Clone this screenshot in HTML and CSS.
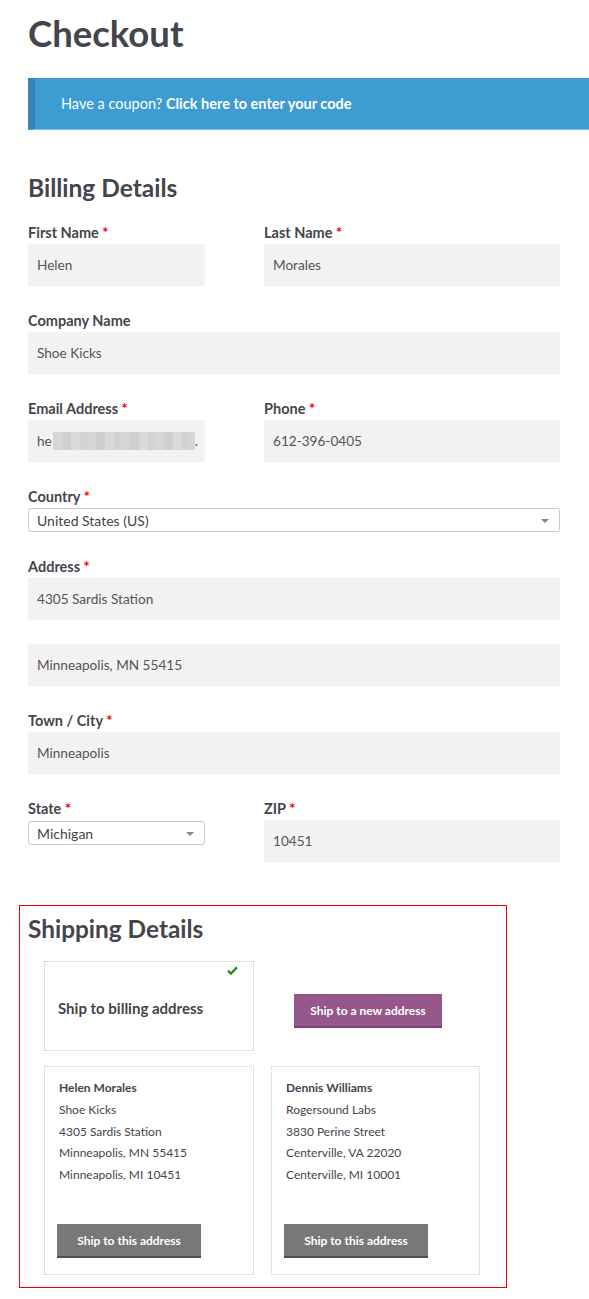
FILE: index.html
```html
<!DOCTYPE html>
<html>
<head>
<meta charset="utf-8">
<title>Checkout</title>
<link rel="stylesheet" href="styles.css">
</head>
<body>
<div class="page">
  <h1 class="title">Checkout</h1>
  <div class="coupon">Have a coupon?&nbsp;<b>Click here to enter your code</b></div>

  <h2 class="section-title">Billing Details</h2>

  <div class="row">
    <div class="field half-l">
      <label class="label">First Name <span class="req">*</span></label>
      <div class="input">Helen</div>
    </div>
    <div class="field half-r">
      <label class="label">Last Name <span class="req">*</span></label>
      <div class="input">Morales</div>
    </div>
  </div>

  <div class="field">
    <label class="label">Company Name</label>
    <div class="input">Shoe Kicks</div>
  </div>

  <div class="row">
    <div class="field half-l">
      <label class="label">Email Address <span class="req">*</span></label>
      <div class="input">he<span class="blur"></span>.</div>
    </div>
    <div class="field half-r">
      <label class="label">Phone <span class="req">*</span></label>
      <div class="input">612-396-0405</div>
    </div>
  </div>

  <div class="field">
    <label class="label">Country <span class="req">*</span></label>
    <div class="select">United States (US)<span class="arrow"></span></div>
  </div>

  <div class="field">
    <label class="label">Address <span class="req">*</span></label>
    <div class="input">4305 Sardis Station</div>
  </div>
  <div class="field">
    <div class="input">Minneapolis, MN 55415</div>
  </div>

  <div class="field">
    <label class="label">Town / City <span class="req">*</span></label>
    <div class="input">Minneapolis</div>
  </div>

  <div class="row">
    <div class="field half-l">
      <label class="label">State <span class="req">*</span></label>
      <div class="select state">Michigan<span class="arrow"></span></div>
    </div>
    <div class="field half-r">
      <label class="label">ZIP <span class="req">*</span></label>
      <div class="input">10451</div>
    </div>
  </div>

  <div class="shipping">
    <h2 class="ship-title">Shipping Details</h2>
    <div class="ship-grid">
      <div class="card billing-card">
        <span class="check"><svg width="11" height="9" viewBox="0 0 11 9"><path d="M1 4.6 L4 7.6 L10 1.2" fill="none" stroke="#1a8a1a" stroke-width="2.2"/></svg></span>
        Ship to billing address
      </div>
      <div class="new-wrap">
        <button class="btn-new">Ship to a new address</button>
      </div>
      <div class="card addr-card">
        <div class="addr-lines">
          <div class="addr-name">Helen Morales</div>
          <div>Shoe Kicks</div>
          <div>4305 Sardis Station</div>
          <div>Minneapolis, MN 55415</div>
          <div>Minneapolis, MI 10451</div>
        </div>
        <button class="btn-ship">Ship to this address</button>
      </div>
      <div class="card addr-card">
        <div class="addr-lines">
          <div class="addr-name">Dennis Williams</div>
          <div>Rogersound Labs</div>
          <div>3830 Perine Street</div>
          <div>Centerville, VA 22020</div>
          <div>Centerville, MI 10001</div>
        </div>
        <button class="btn-ship">Ship to this address</button>
      </div>
    </div>
  </div>
</div>
</body>
</html>
```

FILE: styles.css
```css
* { box-sizing: border-box; }
html, body { overflow-x: hidden; }
body {
  margin: 0;
  font-family: Lato, "Liberation Sans", sans-serif;
  color: #43454b;
  background: #fff;
}
.page {
  width: 532px;
  margin-left: 28px;
}
.title {
  font-size: 36.5px;
  line-height: 46px;
  font-weight: 700;
  margin: 10px 0 22px;
}
.coupon {
  height: 52px;
  margin-right: -29px;
  background: #3d9cd2;
  border-left: 7px solid #3385b5;
  border-bottom: 1px solid #85c0e3;
  display: flex;
  align-items: center;
  padding-left: 26px;
  color: #fff;
  font-size: 14.5px;
}
.coupon b { font-weight: 700; }
.section-title {
  font-size: 24.5px;
  line-height: 32px;
  font-weight: 700;
  margin: 42px 0 18px;
}
.row {
  display: flex;
  gap: 59px;
}
.field { margin-bottom: 24px; }
.half-l { width: 177px; }
.half-r { width: 296px; }
.label {
  display: block;
  font-size: 14.5px;
  line-height: 22px;
  font-weight: 700;
}
.req { color: #e00; }
.input {
  height: 42px;
  background: #f2f2f2;
  padding-left: 9px;
  display: flex;
  align-items: center;
  font-size: 13.6px;
  color: #555;
}
.blur {
  display: inline-block;
  width: 142px;
  height: 18px;
  margin-left: 1px;
  background: repeating-linear-gradient(90deg, #d6d6d6 0 9px, #cfcfcf 9px 18px, #dadada 18px 27px, #d2d2d2 27px 34px);
}
.select {
  position: relative;
  height: 24px;
  border: 1px solid #c8c8c8;
  border-radius: 3px;
  background: #fff;
  padding-left: 8px;
  display: flex;
  align-items: center;
  font-size: 14px;
  color: #444;
}
.select.state { margin-top: 1px; }
.arrow {
  position: absolute;
  right: 10px;
  top: 10px;
  border-left: 4px solid transparent;
  border-right: 4px solid transparent;
  border-top: 4px solid #888;
}
.shipping {
  width: 488px;
  margin: 19px 0 0 -9px;
  border: 1px solid #e00;
  padding: 7px 0 12px;
}
.ship-title {
  font-size: 24.4px;
  line-height: 32px;
  font-weight: 700;
  margin: 0 0 16px 8px;
}
.ship-grid {
  margin-left: 24px;
  display: grid;
  grid-template-columns: 210px 209px;
  column-gap: 17px;
  row-gap: 15px;
}
.card {
  border: 1px dotted #c8c8c8;
}
.billing-card {
  position: relative;
  height: 90px;
  display: flex;
  align-items: center;
  padding: 4px 0 0 13px;
  font-size: 15px;
  font-weight: 700;
}
.check {
  position: absolute;
  top: 4px;
  right: 15px;
  line-height: 0;
}
.new-wrap { display: flex; }
.btn-new {
  margin: 33px 0 0 23px;
  width: 148px;
  height: 34px;
  border: 0;
  border-bottom: 2px solid #7a4370;
  background: #96588a;
  color: #fff;
  font-family: inherit;
  font-size: 12px;
  font-weight: 700;
  padding: 0;
  cursor: pointer;
}
.addr-card {
  height: 209px;
  display: flex;
  flex-direction: column;
  padding: 10px 13px 16px 14px;
}
.addr-lines {
  font-size: 12px;
  line-height: 21.75px;
  color: #43454b;
}
.addr-name { font-weight: 700; }
.btn-ship {
  margin-top: auto;
  margin-left: -2px;
  width: 144px;
  height: 34px;
  border: 0;
  border-bottom: 2px solid #4e4e4e;
  background: #797877;
  color: #fff;
  font-family: inherit;
  font-size: 12px;
  font-weight: 700;
  padding: 0;
  cursor: pointer;
}
```
